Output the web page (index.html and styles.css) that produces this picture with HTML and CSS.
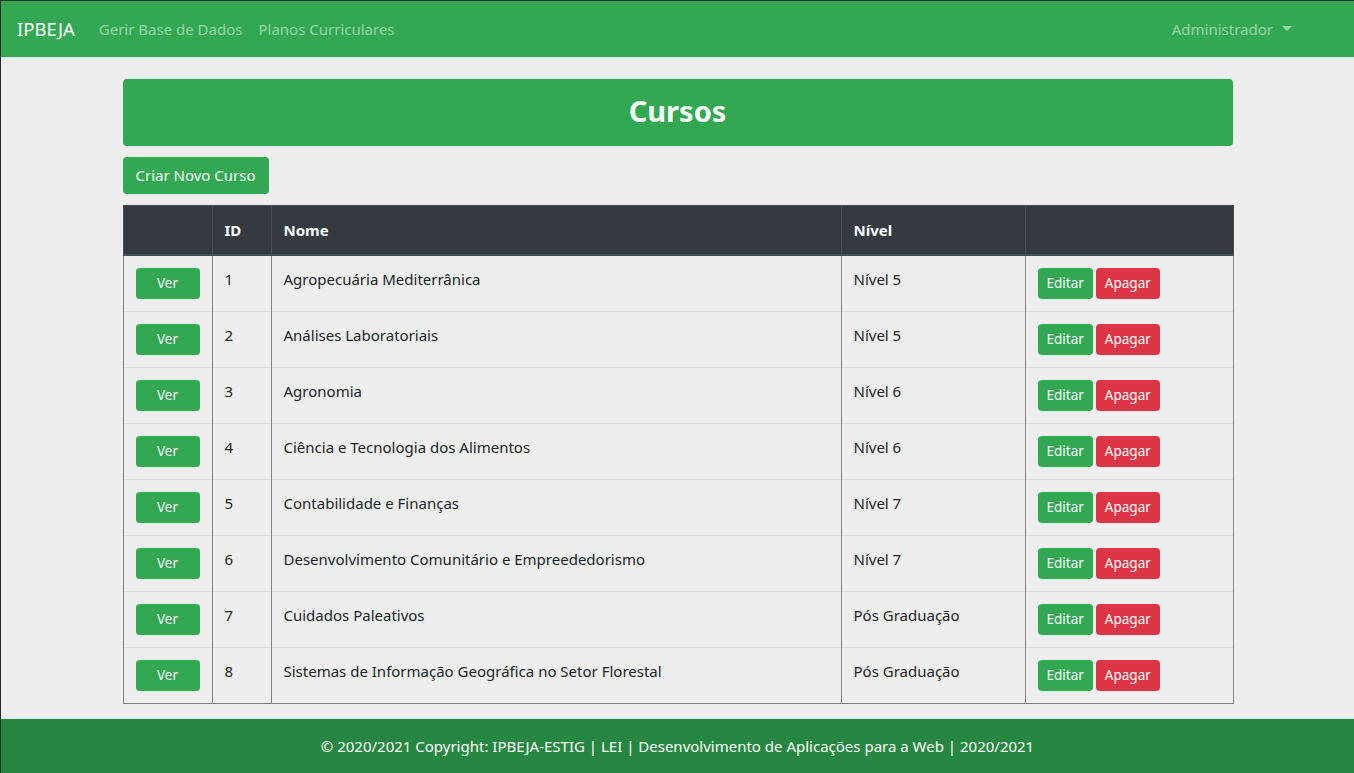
FILE: index.html
```html
<!DOCTYPE html>
<html lang="pt">
<head>
<meta charset="utf-8">
<title>Cursos</title>
<link rel="stylesheet" href="styles.css">
</head>
<body>
<div class="page">
  <nav class="navbar">
    <div class="nav-left">
      <a class="brand" href="#">IPBEJA</a>
      <a class="nav-link" href="#">Gerir Base de Dados</a>
      <a class="nav-link" href="#">Planos Curriculares</a>
    </div>
    <a class="nav-link dropdown" href="#">Administrador <span class="caret"></span></a>
  </nav>

  <main class="container">
    <div class="title-card"><h1>Cursos</h1></div>
    <div class="actions"><a class="btn btn-success btn-create" href="#">Criar Novo Curso</a></div>
    <table class="table">
      <colgroup>
        <col class="c-ver"><col class="c-id"><col class="c-nome"><col class="c-nivel"><col class="c-act">
      </colgroup>
      <thead>
        <tr><th></th><th>ID</th><th>Nome</th><th>Nível</th><th></th></tr>
      </thead>
      <tbody>
        <tr><td><a class="btn btn-sm btn-success btn-ver" href="#">Ver</a></td><td>1</td><td>Agropecuária Mediterrânica</td><td>Nível 5</td><td><a class="btn btn-sm btn-success" href="#">Editar</a><a class="btn btn-sm btn-danger" href="#">Apagar</a></td></tr>
        <tr><td><a class="btn btn-sm btn-success btn-ver" href="#">Ver</a></td><td>2</td><td>Análises Laboratoriais</td><td>Nível 5</td><td><a class="btn btn-sm btn-success" href="#">Editar</a><a class="btn btn-sm btn-danger" href="#">Apagar</a></td></tr>
        <tr><td><a class="btn btn-sm btn-success btn-ver" href="#">Ver</a></td><td>3</td><td>Agronomia</td><td>Nível 6</td><td><a class="btn btn-sm btn-success" href="#">Editar</a><a class="btn btn-sm btn-danger" href="#">Apagar</a></td></tr>
        <tr><td><a class="btn btn-sm btn-success btn-ver" href="#">Ver</a></td><td>4</td><td>Ciência e Tecnologia dos Alimentos</td><td>Nível 6</td><td><a class="btn btn-sm btn-success" href="#">Editar</a><a class="btn btn-sm btn-danger" href="#">Apagar</a></td></tr>
        <tr><td><a class="btn btn-sm btn-success btn-ver" href="#">Ver</a></td><td>5</td><td>Contabilidade e Finanças</td><td>Nível 7</td><td><a class="btn btn-sm btn-success" href="#">Editar</a><a class="btn btn-sm btn-danger" href="#">Apagar</a></td></tr>
        <tr><td><a class="btn btn-sm btn-success btn-ver" href="#">Ver</a></td><td>6</td><td>Desenvolvimento Comunitário e Empreededorismo</td><td>Nível 7</td><td><a class="btn btn-sm btn-success" href="#">Editar</a><a class="btn btn-sm btn-danger" href="#">Apagar</a></td></tr>
        <tr><td><a class="btn btn-sm btn-success btn-ver" href="#">Ver</a></td><td>7</td><td>Cuidados Paleativos</td><td>Pós Graduação</td><td><a class="btn btn-sm btn-success" href="#">Editar</a><a class="btn btn-sm btn-danger" href="#">Apagar</a></td></tr>
        <tr><td><a class="btn btn-sm btn-success btn-ver" href="#">Ver</a></td><td>8</td><td>Sistemas de Informação Geográfica no Setor Florestal</td><td>Pós Graduação</td><td><a class="btn btn-sm btn-success" href="#">Editar</a><a class="btn btn-sm btn-danger" href="#">Apagar</a></td></tr>
      </tbody>
    </table>
  </main>

  <footer class="footer">© 2020/2021 Copyright: IPBEJA-ESTIG | LEI | Desenvolvimento de Aplicações para a Web | 2020/2021</footer>
</div>
</body>
</html>
```

FILE: styles.css
```css
* { box-sizing: border-box; }
html, body { margin: 0; padding: 0; }
body {
  font-family: "Noto Sans", "Open Sans", "DejaVu Sans", sans-serif;
  font-size: 16px;
  line-height: 1.5;
  color: #212529;
  background: #eeeeee;
  border-top: 1px solid #2a2a2a;
  border-left: 1px solid #2a2a2a;
  height: 773px;
  overflow: hidden;
}
a { text-decoration: none; }
.page { display: flex; flex-direction: column; height: 772px; }

.navbar {
  height: 56px;
  flex: none;
  background: #31a851;
  display: flex;
  align-items: center;
  justify-content: space-between;
  padding: 0 16px;
}
.nav-left { display: flex; align-items: center; }
.brand { color: #fff; font-size: 18.5px; margin-right: 16px; }
.nav-link { color: rgba(255,255,255,.5); padding: 8px; font-size: 15px; }
.dropdown { margin-right: 38px; display: flex; align-items: center; }
.caret {
  display: inline-block;
  margin-left: 9px;
  width: 0; height: 0;
  border-top: 5px solid rgba(255,255,255,.5);
  border-left: 5px solid transparent;
  border-right: 5px solid transparent;
  margin-top: -2px;
}

.container {
  width: 1110px;
  margin: 22px auto 0;
  flex: none;
}
.title-card {
  background: #31a851;
  border-radius: 4px;
  height: 67px;
  display: flex;
  align-items: center;
  justify-content: center;
  padding-bottom: 3px;
}
.title-card h1 { margin: 0; color: #fff; font-size: 29px; font-weight: 700; line-height: 1.2; }
.actions { margin: 11px 0; }

.btn {
  display: inline-block;
  color: #fff;
  border-radius: 4px;
  text-align: center;
  vertical-align: middle;
}
.btn-success { background: #31a851; }
.btn-danger { background: #dc3545; }
.btn-create { padding: 6px 13px; font-size: 15px; line-height: 25px; }
.btn-sm { font-size: 13.5px; line-height: 21px; padding: 5px 9px; }
.btn-ver { width: 64px; }
.btn-sm + .btn-sm { margin-left: 3px; }

.table {
  width: 100%;
  border-collapse: collapse;
  table-layout: fixed;
  border: 1px solid #808080;
}
.c-ver { width: 89px; }
.c-id { width: 59px; }
.c-nome { width: 570px; }
.c-nivel { width: 184px; }
.c-act { width: 208px; }
.table th {
  background: #343a40;
  color: #fff;
  text-align: left;
  font-weight: 700;
  font-size: 15px;
  padding: 11px 12px;
  height: 49px;
  border: 1px solid #454d55;
  border-bottom-width: 2px;
}
.table td {
  padding: 12px;
  height: 56px;
  vertical-align: top;
  font-size: 15px;
  border-left: 1px solid #808080;
  border-right: 1px solid #808080;
  border-top: 1px solid #dcdcdc;
}

.footer {
  margin-top: auto;
  height: 54px;
  flex: none;
  background: #268742;
  color: #fff;
  display: flex;
  align-items: center;
  justify-content: center;
  font-size: 15px;
}
```
